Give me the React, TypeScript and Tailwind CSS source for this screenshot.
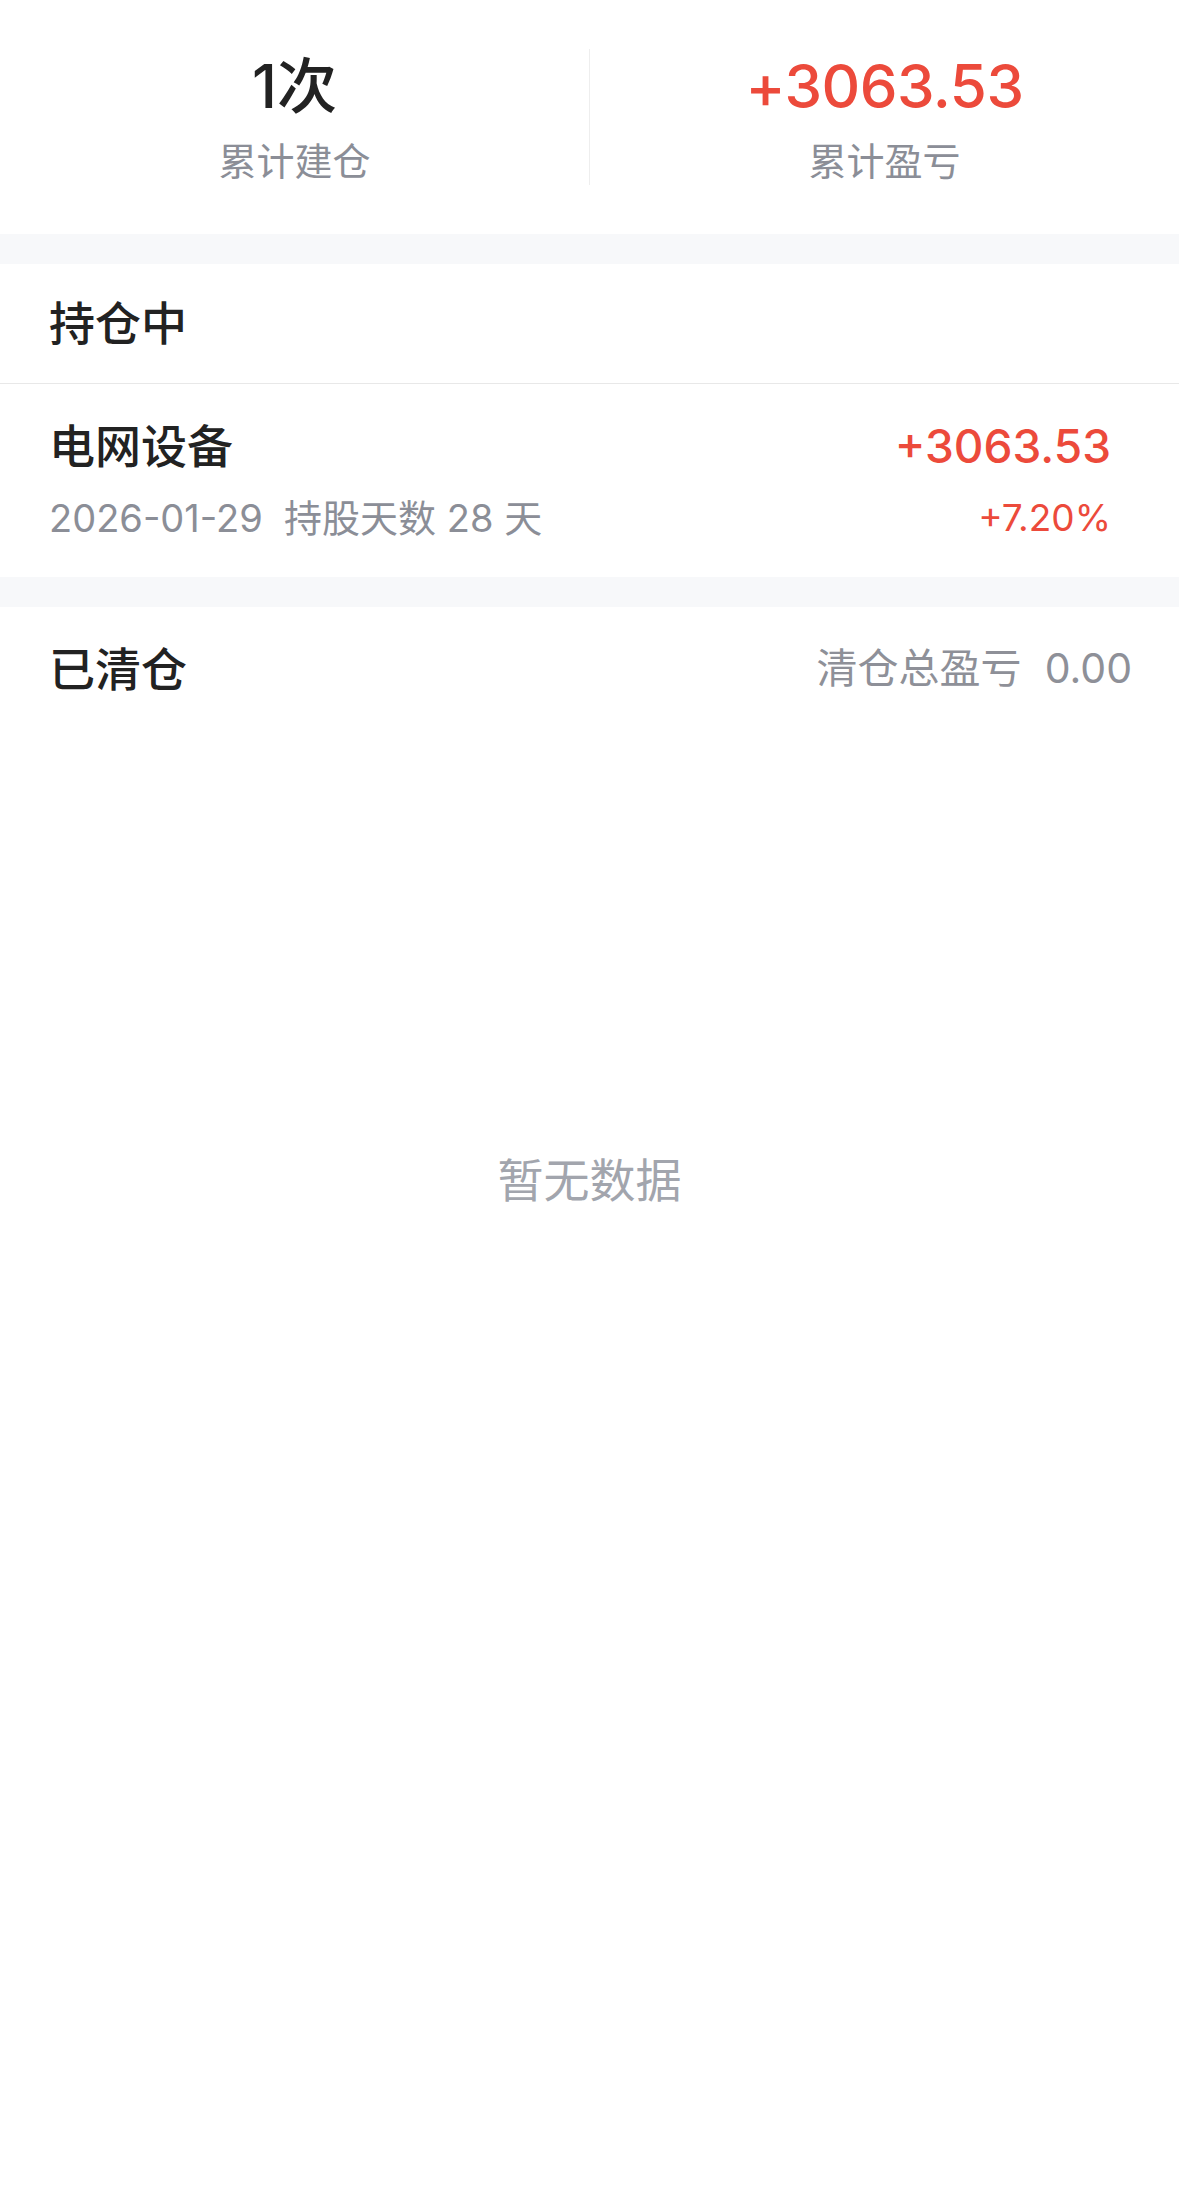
const font = { fontFamily: 'Inter, "Noto Sans CJK SC", sans-serif' };

export default function App() {
  return (
    <div className="w-[1179px] h-[2189px] bg-white" style={font}>
      {/* Summary */}
      <div className="flex items-center h-[234px]">
        <div className="flex-1 flex flex-col items-center">
          <div className="text-[60px] leading-none font-medium text-[#222222] mt-[2px]">1次</div>
          <div className="text-[38px] leading-none text-[#8b8e97] mt-[26px]">累计建仓</div>
        </div>
        <div className="w-px h-[136px] bg-[#eeeeee]" />
        <div className="flex-1 flex flex-col items-center">
          <div className="text-[60px] leading-none font-medium text-[#ec4a3b] mt-[2px] tracking-[-0.5px]">+3063.53</div>
          <div className="text-[38px] leading-none text-[#8b8e97] mt-[26px]">累计盈亏</div>
        </div>
      </div>

      <div className="h-[30px] bg-[#f7f8fa]" />

      {/* Holding */}
      <div className="h-[120px] flex items-center px-[49px] border-b border-[#e8e8e8]">
        <span className="text-[46px] font-medium text-[#222222]">持仓中</span>
      </div>
      <div className="h-[193px] flex items-center justify-between pl-[49px] pr-[68px]">
        <div className="flex flex-col">
          <span className="text-[46px] leading-none font-medium text-[#222222] mt-[-2px]">电网设备</span>
          <span className="text-[38px] leading-none text-[#8b8e97] mt-[30px]">
            2026-01-29&nbsp;&nbsp;持股天数 28 天
          </span>
        </div>
        <div className="flex flex-col items-end">
          <span className="text-[46px] leading-none font-medium text-[#ec4a3b] mt-[-2px]">+3063.53</span>
          <span className="text-[37px] leading-none text-[#ec4a3b] mt-[30px]">+7.20%</span>
        </div>
      </div>

      <div className="h-[30px] bg-[#f7f8fa]" />

      {/* Closed */}
      <div className="h-[124px] flex items-center justify-between pl-[49px] pr-[47px]">
        <span className="text-[46px] font-medium text-[#222222]">已清仓</span>
        <span className="text-[41px] text-[#8e9098]">清仓总盈亏&nbsp;&nbsp;0.00</span>
      </div>
      <div className="flex justify-center pt-[426px]">
        <span className="text-[46px] leading-none text-[#a2a5ad]">暂无数据</span>
      </div>
    </div>
  );
}
